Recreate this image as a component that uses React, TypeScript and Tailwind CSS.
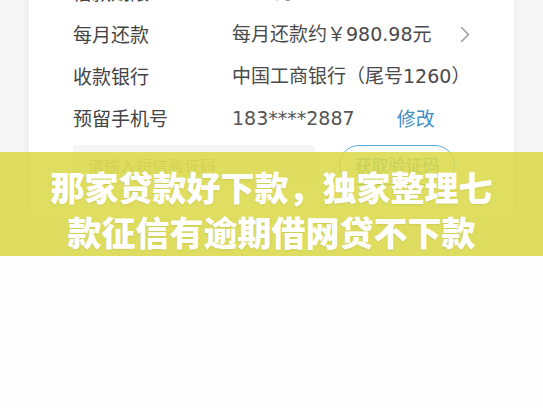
import React from 'react';

const num = '"DejaVu Sans", "Noto Sans CJK SC", sans-serif';

function N({ children }: { children: React.ReactNode }) {
  return <span style={{ fontFamily: num }} className="text-[19px]">{children}</span>;
}

function Chevron() {
  return (
    <svg width="12" height="17" viewBox="0 0 12 17" fill="none" stroke="#9c9c9c" strokeWidth={1.5} strokeLinecap="round" strokeLinejoin="round">
      <path d="M2.5 1.5l7 7-7 7" />
    </svg>
  );
}

export default function App() {
  return (
    <div
      className="relative w-[543px] h-[408px] overflow-hidden bg-[#fdfdfd]"
      style={{ fontFamily: '"Noto Sans CJK SC", "Noto Sans", sans-serif' }}
    >
      <div className="h-[256px] bg-[#f6f6f6] px-[29px] overflow-hidden">
        <div className="-mt-[40px] pt-[11px] pb-[33px] bg-white rounded-b-[12px] shadow-[0_2px_10px_rgba(0,0,0,0.06)] pl-[44px] pr-[30px] text-[19px] text-[#444]">
          <div className="h-[42px] flex items-center">
            <span className="w-[159px] shrink-0">借款期限</span>
            <span><N>12</N>个月</span>
          </div>
          <div className="h-[42px] flex items-center">
            <span className="w-[159px] shrink-0">每月还款</span>
            <span className="text-[#4a4a4a]">
              每月还款约￥<N>980.98</N>元
            </span>
            <span className="ml-[27px] flex items-center">
              <Chevron />
            </span>
          </div>
          <div className="h-[42px] flex items-center">
            <span className="w-[159px] shrink-0">收款银行</span>
            <span className="text-[#4a4a4a]">
              中国工商银行（尾号<N>1260</N>）
            </span>
          </div>
          <div className="h-[42px] flex items-center">
            <span className="w-[159px] shrink-0">预留手机号</span>
            <span className="text-[#555]">
              <N>183****2887</N>
            </span>
            <span className="ml-[42px] text-[#3d8fc6]">修改</span>
          </div>
          <div className="mt-[6px] flex items-center">
            <div className="w-[242px] h-[40px] rounded-[4px] bg-[#f5f5f5] flex items-center pl-[15px] text-[16px] text-[#a5a5a5]">
              请输入短信验证码
            </div>
            <div className="ml-[24px] w-[116px] h-[40px] rounded-full border-[1.5px] border-[#5aacdc] flex items-center justify-center text-[17px] text-[#4a9bd0]">
              获取验证码
            </div>
          </div>
        </div>
      </div>

      <div className="absolute left-0 right-0 top-[152px] h-[104px] bg-[rgba(218,216,70,0.86)] flex flex-col items-center justify-center pt-[10px]">
        <p className="text-white font-black text-[34px] leading-[45px] [text-shadow:0_1px_2px_rgba(0,0,0,0.08)]">
          那家贷款好下款，独家整理七
        </p>
        <p className="text-white font-black text-[34px] leading-[45px] [text-shadow:0_1px_2px_rgba(0,0,0,0.08)]">
          款征信有逾期借网贷不下款
        </p>
      </div>
    </div>
  );
}
